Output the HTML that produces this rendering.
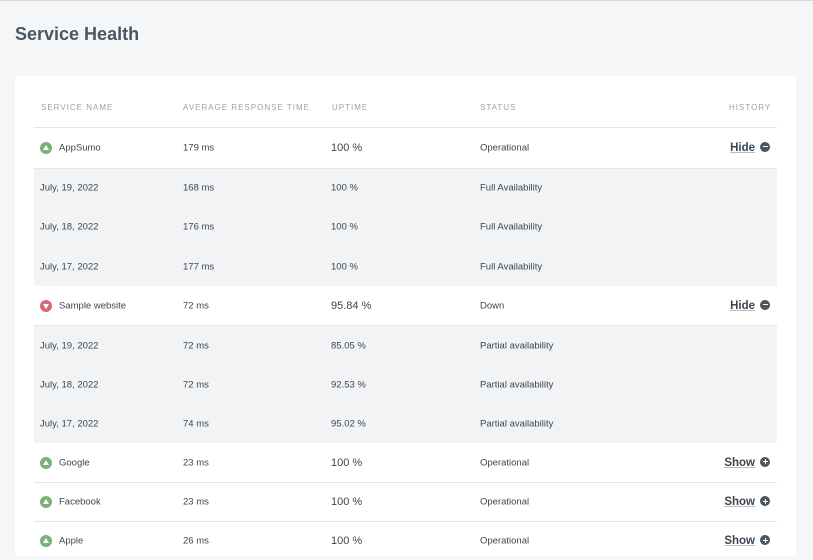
<!DOCTYPE html>
<html><head><style>
*{margin:0;padding:0;box-sizing:border-box}
body{width:813px;height:547px;overflow:hidden;background:#f5f6f8;font-family:"Liberation Sans",sans-serif;color:#3b4650;position:relative;border-top:1px solid #d5d8dc}
h1{position:absolute;left:15px;top:23px;font-size:18px;font-weight:bold;color:#4a5660}
.card{position:absolute;left:15px;top:75px;width:781px;height:480px;background:#fff}
.hd{position:absolute;top:102px;font-size:8px;letter-spacing:1px;color:#9aa2aa}
.row{position:absolute;left:34px;width:743px;border-top:1px solid #e2e6ea;font-size:9.5px}
.row.g{background:#f1f3f5;border-top:none}
.row span{position:absolute;top:50%;transform:translateY(-50%)}
.c1{left:6px}.c2{left:149px}.c3{left:297px}.c4{left:446px}
.ic{display:inline-block;width:12px;height:12px;border-radius:50%;vertical-align:middle;margin-right:7px;position:relative}
.up{background:#7ab07a}.dn{background:#d46a78}
.up:after{content:"";position:absolute;left:3px;top:3px;border-left:3px solid transparent;border-right:3px solid transparent;border-bottom:5px solid #fff}
.dn:after{content:"";position:absolute;left:3px;top:4px;border-left:3px solid transparent;border-right:3px solid transparent;border-top:5px solid #fff}
.big{font-size:11px}
.act{right:7px;font-size:11.5px;font-weight:bold;color:#3b4650;text-decoration:underline;text-decoration-color:#bbb}
.act i{display:inline-block;width:10px;height:10px;border-radius:50%;background:#4a5660;margin-left:5px;vertical-align:-1px;position:relative}
.act i:before{content:"";position:absolute;left:2.5px;top:4.5px;width:5px;height:1px;background:#fff}
.act i.p:after{content:"";position:absolute;left:4.5px;top:2.5px;width:1px;height:5px;background:#fff}
</style></head><body>
<h1>Service Health</h1>
<div class="card"></div>
<div class="hd" style="left:41px">SERVICE NAME</div>
<div class="hd" style="left:183px">AVERAGE RESPONSE TIME</div>
<div class="hd" style="left:332px">UPTIME</div>
<div class="hd" style="left:480px">STATUS</div>
<div class="hd" style="left:729px">HISTORY</div>

<div class="row" style="top:126px;height:40px"><span class="c1"><i class="ic up"></i>AppSumo</span><span class="c2">179 ms</span><span class="c3 big">100 %</span><span class="c4">Operational</span><span class="act">Hide<i></i></span></div>
<div class="row g" style="top:167px;height:39px;border-top:1px solid #e2e6ea"><span class="c1">July, 19, 2022</span><span class="c2">168 ms</span><span class="c3">100 %</span><span class="c4">Full Availability</span></div>
<div class="row g" style="top:206px;height:40px"><span class="c1">July, 18, 2022</span><span class="c2">176 ms</span><span class="c3">100 %</span><span class="c4">Full Availability</span></div>
<div class="row g" style="top:246px;height:39px"><span class="c1">July, 17, 2022</span><span class="c2">177 ms</span><span class="c3">100 %</span><span class="c4">Full Availability</span></div>
<div class="row" style="top:285px;height:39px;border-top:none"><span class="c1"><i class="ic dn"></i>Sample website</span><span class="c2">72 ms</span><span class="c3 big">95.84 %</span><span class="c4">Down</span><span class="act">Hide<i></i></span></div>
<div class="row g" style="top:324px;height:40px;border-top:1px solid #e2e6ea"><span class="c1">July, 19, 2022</span><span class="c2">72 ms</span><span class="c3">85.05 %</span><span class="c4">Partial availability</span></div>
<div class="row g" style="top:364px;height:39px"><span class="c1">July, 18, 2022</span><span class="c2">72 ms</span><span class="c3">92.53 %</span><span class="c4">Partial availability</span></div>
<div class="row g" style="top:403px;height:39px"><span class="c1">July, 17, 2022</span><span class="c2">74 ms</span><span class="c3">95.02 %</span><span class="c4">Partial availability</span></div>
<div class="row" style="top:442px;height:39px;border-top:none"><span class="c1"><i class="ic up"></i>Google</span><span class="c2">23 ms</span><span class="c3 big">100 %</span><span class="c4">Operational</span><span class="act">Show<i class="p"></i></span></div>
<div class="row" style="top:481px;height:39px"><span class="c1"><i class="ic up"></i>Facebook</span><span class="c2">23 ms</span><span class="c3 big">100 %</span><span class="c4">Operational</span><span class="act">Show<i class="p"></i></span></div>
<div class="row" style="top:520px;height:39px"><span class="c1"><i class="ic up"></i>Apple</span><span class="c2">26 ms</span><span class="c3 big">100 %</span><span class="c4">Operational</span><span class="act">Show<i class="p"></i></span></div>
</body></html>
